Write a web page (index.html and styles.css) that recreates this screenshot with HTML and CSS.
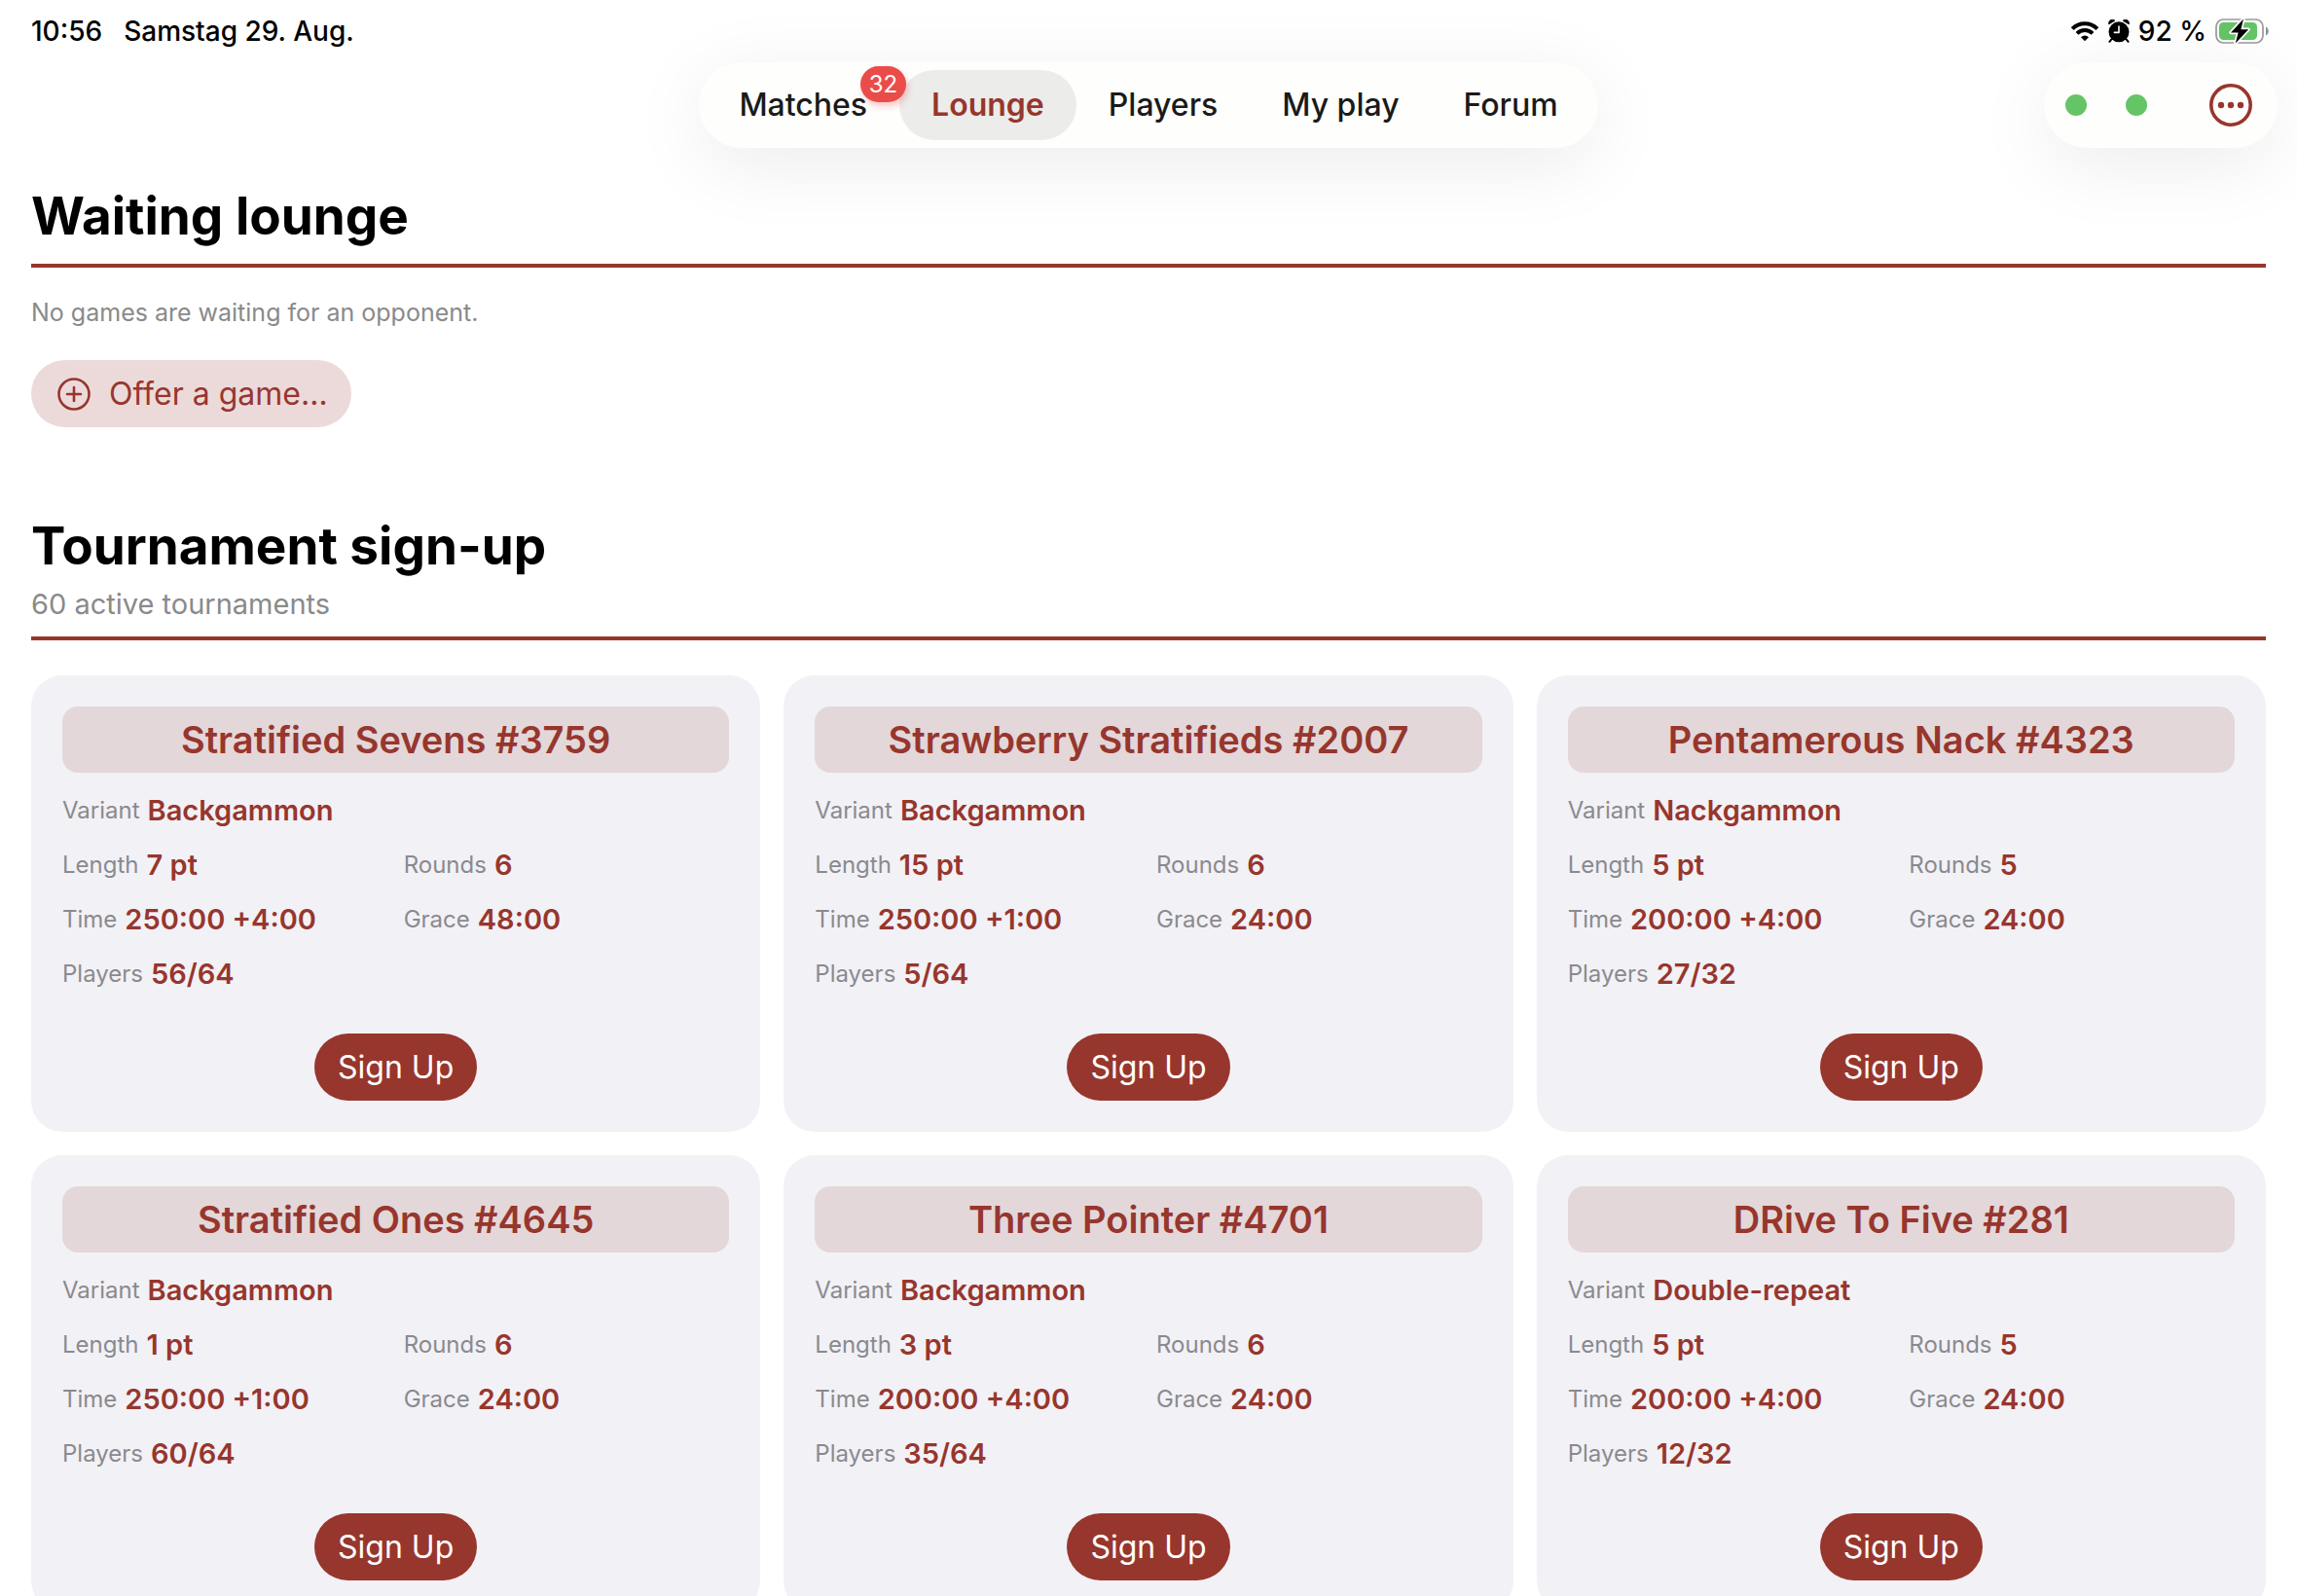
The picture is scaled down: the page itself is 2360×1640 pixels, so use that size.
FILE: index.html
```html
<!DOCTYPE html>
<html lang="en">
<head>
<meta charset="utf-8">
<meta name="viewport" content="width=device-width, initial-scale=1">
<title>Lounge</title>
<link rel="stylesheet" href="styles.css">
</head>
<body>
<div class="app">
  <header class="top">
    <div class="status">
      <div class="status-group status-left"><span>10:56</span><span lang="de">Samstag 29. Aug.</span></div>
      <div class="status-group status-right">
        <svg class="icon-wifi" viewBox="0 0 30 22" aria-hidden="true">
          <path d="M2.2 8.6a18.2 18.2 0 0 1 25.6 0" fill="none" stroke="#000" stroke-width="4"/>
          <path d="M7 13.4a11.4 11.4 0 0 1 16 0" fill="none" stroke="#000" stroke-width="4"/>
          <path d="M15 21.2l-4-4a5.7 5.7 0 0 1 8 0z" fill="#000"/>
        </svg>
        <svg class="icon-alarm" viewBox="0 0 22 24" aria-hidden="true">
          <circle cx="11" cy="12.8" r="10.5"/>
          <path d="M.9 4.600A3.400 3.400 0 0 1 6.400 1.200zM21.100 4.600A3.400 3.400 0 0 0 15.600 1.200z" stroke="#000" stroke-width="1.200" stroke-linejoin="round"/>
          <path d="M3.400 20.400l-2 2.400M18.600 20.400l2 2.400" stroke="#000" stroke-width="2" stroke-linecap="round"/>
          <path d="M11 7v6.400H6.400" fill="none" stroke="#fff" stroke-width="1.600" stroke-linecap="round" stroke-linejoin="round"/>
        </svg>
        <span>92 %</span>
        <svg class="icon-battery" viewBox="0 0 56 28" aria-hidden="true">
          <rect x="1" y="2" width="48" height="24" rx="7.500" fill="none" stroke="#9a9a9a" stroke-width="1.700"/>
          <path d="M52 9.500c3.600 1.800 3.600 7.200 0 9z" fill="#8f8f8f"/>
          <rect x="4" y="5" width="39" height="18" rx="4.500" fill="#65c466"/>
          <path d="M29 1.500 16 15.500h7.600L20.800 26.500 34.200 12.200h-7.800z" fill="#000" stroke="#fff" stroke-width="3.400" stroke-linejoin="round" paint-order="stroke"/>
        </svg>
      </div>
    </div>
    <div class="bar">
      <nav class="tabs" aria-label="Main">
        <a class="tab" href="#matches">Matches<span class="badge">32</span></a>
        <a class="tab tab-active" href="#lounge" aria-current="page">Lounge</a>
        <a class="tab" href="#players">Players</a>
        <a class="tab" href="#play">My play</a>
        <a class="tab" href="#forum">Forum</a>
      </nav>
      <div class="tools">
        <span class="dot"></span>
        <span class="dot"></span>
        <button class="more" type="button" aria-label="More">
          <svg viewBox="0 0 44 44" aria-hidden="true">
            <circle cx="22" cy="22" r="20.200" fill="none" stroke="currentColor" stroke-width="3.600"/>
            <circle cx="12" cy="22" r="3.200" fill="currentColor"/><circle cx="22" cy="22" r="3.200" fill="currentColor"/><circle cx="32" cy="22" r="3.200" fill="currentColor"/>
          </svg>
        </button>
      </div>
    </div>
  </header>

  <main class="content">
    <section class="waiting">
      <div class="heading"><h1>Waiting lounge</h1></div>
      <p class="note">No games are waiting for an opponent.</p>
      <button class="offer" type="button">
        <svg viewBox="0 0 36 36" aria-hidden="true">
          <circle cx="18" cy="18" r="15.500" fill="none" stroke="currentColor" stroke-width="2.600"/>
          <path d="M18 11v14M11 18h14" stroke="currentColor" stroke-width="2.600" stroke-linecap="round"/>
        </svg>
        <span>Offer a game…</span>
      </button>
    </section>

    <section class="signup">
      <div class="heading"><h1>Tournament sign-up</h1><p class="sub">60 active tournaments</p></div>
      <div class="cards">
        <article class="card">
          <h2>Stratified Sevens #3759</h2>
          <dl>
            <div class="wide"><dt>Variant</dt><dd>Backgammon</dd></div>
            <div><dt>Length</dt><dd>7 pt</dd></div><div><dt>Rounds</dt><dd>6</dd></div>
            <div><dt>Time</dt><dd>250:00 +4:00</dd></div><div><dt>Grace</dt><dd>48:00</dd></div>
            <div><dt>Players</dt><dd>56/64</dd></div>
          </dl>
          <button class="join" type="button">Sign Up</button>
        </article>
        <article class="card">
          <h2>Strawberry Stratifieds #2007</h2>
          <dl>
            <div class="wide"><dt>Variant</dt><dd>Backgammon</dd></div>
            <div><dt>Length</dt><dd>15 pt</dd></div><div><dt>Rounds</dt><dd>6</dd></div>
            <div><dt>Time</dt><dd>250:00 +1:00</dd></div><div><dt>Grace</dt><dd>24:00</dd></div>
            <div><dt>Players</dt><dd>5/64</dd></div>
          </dl>
          <button class="join" type="button">Sign Up</button>
        </article>
        <article class="card">
          <h2>Pentamerous Nack #4323</h2>
          <dl>
            <div class="wide"><dt>Variant</dt><dd>Nackgammon</dd></div>
            <div><dt>Length</dt><dd>5 pt</dd></div><div><dt>Rounds</dt><dd>5</dd></div>
            <div><dt>Time</dt><dd>200:00 +4:00</dd></div><div><dt>Grace</dt><dd>24:00</dd></div>
            <div><dt>Players</dt><dd>27/32</dd></div>
          </dl>
          <button class="join" type="button">Sign Up</button>
        </article>
        <article class="card">
          <h2>Stratified Ones #4645</h2>
          <dl>
            <div class="wide"><dt>Variant</dt><dd>Backgammon</dd></div>
            <div><dt>Length</dt><dd>1 pt</dd></div><div><dt>Rounds</dt><dd>6</dd></div>
            <div><dt>Time</dt><dd>250:00 +1:00</dd></div><div><dt>Grace</dt><dd>24:00</dd></div>
            <div><dt>Players</dt><dd>60/64</dd></div>
          </dl>
          <button class="join" type="button">Sign Up</button>
        </article>
        <article class="card">
          <h2>Three Pointer #4701</h2>
          <dl>
            <div class="wide"><dt>Variant</dt><dd>Backgammon</dd></div>
            <div><dt>Length</dt><dd>3 pt</dd></div><div><dt>Rounds</dt><dd>6</dd></div>
            <div><dt>Time</dt><dd>200:00 +4:00</dd></div><div><dt>Grace</dt><dd>24:00</dd></div>
            <div><dt>Players</dt><dd>35/64</dd></div>
          </dl>
          <button class="join" type="button">Sign Up</button>
        </article>
        <article class="card">
          <h2>DRive To Five #281</h2>
          <dl>
            <div class="wide"><dt>Variant</dt><dd>Double-repeat</dd></div>
            <div><dt>Length</dt><dd>5 pt</dd></div><div><dt>Rounds</dt><dd>5</dd></div>
            <div><dt>Time</dt><dd>200:00 +4:00</dd></div><div><dt>Grace</dt><dd>24:00</dd></div>
            <div><dt>Players</dt><dd>12/32</dd></div>
          </dl>
          <button class="join" type="button">Sign Up</button>
        </article>
      </div>
    </section>
  </main>
</div>
</body>
</html>
```
FILE: styles.css
```css
:root {
  --accent: #97362d;
  --gray: #8a8a8e;
  --gray-plain: #8a8a8a;
}

* { box-sizing: border-box; }

body {
  margin: 0;
  background: #fff;
  color: #000;
  font-family: Inter, "Liberation Sans", sans-serif;
}

h1, h2, p, dl, dd { margin: 0; }

button {
  border: 0;
  padding: 0;
  background: none;
  font: inherit;
  cursor: pointer;
}

svg { display: block; flex: none; }

.app {
  display: flex;
  flex-direction: column;
  height: 100vh;
}

/* Status line and floating bars */
.top {
  position: relative;
  z-index: 1;
  flex: none;
}

.status {
  display: flex;
  justify-content: space-between;
  height: 64px;
  padding: 0 28px 0 32px;
  font-size: 28px;
  font-weight: 500;
}

.status-group { display: flex; align-items: center; }
.status-left { gap: 22px; }
.status-right { gap: 9px; }

.icon-wifi { width: 30px; height: 22px; }
.icon-alarm { width: 22px; height: 24px; }
.icon-battery { width: 56px; height: 28px; }

.bar {
  display: grid;
  grid-template-columns: 1fr auto 1fr;
  padding: 0 20px;
}

.tabs, .tools {
  display: flex;
  align-items: center;
  height: 88px;
  border-radius: 44px;
  background: #fefefc;
  box-shadow: 0 16px 80px rgba(0, 0, 0, 0.08);
}

.tabs {
  grid-column: 2;
  padding: 0 8px;
}

.tab {
  position: relative;
  padding: 0 33px;
  border-radius: 36px;
  color: #1a1a1a;
  font-size: 32px;
  font-weight: 500;
  line-height: 72px;
  text-decoration: none;
}

.tab-active {
  background: #ececeb;
  color: var(--accent);
  font-weight: 600;
}

.badge {
  position: absolute;
  z-index: 1;
  top: -4px;
  right: -7px;
  padding: 0 9px;
  border-radius: 19px;
  background: #ea4d49;
  box-shadow: 2px 4px 6px rgba(234, 77, 73, 0.3);
  color: #fff;
  font-size: 24px;
  font-weight: 400;
  line-height: 37px;
}

.tools {
  justify-self: end;
  padding: 0 26px 0 22px;
}

.dot {
  width: 22px;
  height: 22px;
  margin-right: 40px;
  border-radius: 50%;
  background: #65c466;
}

.more {
  margin-left: 24px;
  color: var(--accent);
}

.more svg { width: 44px; height: 44px; }

/* Scrolling content */
.content {
  flex: 1;
  min-height: 0;
  padding: 36px 32px 32px;
  overflow-y: auto;
  scrollbar-width: none;
}

.heading {
  border-bottom: 4px solid var(--accent);
}

h1 {
  font-size: 53px;
  font-weight: 700;
  line-height: 68px;
}

.waiting .heading { padding-bottom: 15px; }

.note {
  padding: 29px 0 31px;
  color: var(--gray-plain);
  font-size: 25px;
  line-height: 35px;
}

.offer {
  display: flex;
  align-items: center;
  gap: 18px;
  height: 69px;
  padding: 0 24px 0 26px;
  border-radius: 35px;
  background: #ecdadb;
  color: var(--accent);
  font-size: 32px;
}

.offer svg { width: 36px; height: 36px; }

.signup { padding-top: 88px; }

.sub {
  padding: 4px 0 12px;
  color: var(--gray-plain);
  font-size: 29px;
  line-height: 43px;
}

.cards {
  display: grid;
  grid-template-columns: repeat(3, 1fr);
  gap: 24px;
  padding-top: 36px;
}

.card {
  display: flex;
  flex-direction: column;
  align-items: center;
  padding: 32px;
  border-radius: 32px;
  background: #f2f1f6;
}

h2 {
  width: 100%;
  border-radius: 16px;
  background: #e3d7d9;
  color: var(--accent);
  font-size: 38px;
  font-weight: 600;
  line-height: 68px;
  text-align: center;
}

dl {
  display: grid;
  grid-template-columns: 1fr 1fr;
  column-gap: 16px;
  width: 100%;
  padding: 10px 0 34px;
}

dl div {
  display: flex;
  align-items: center;
  gap: 8px;
  height: 56px;
}

.wide { grid-column: 1 / -1; }

dt {
  color: var(--gray);
  font-size: 24px;
}

dd {
  color: var(--accent);
  font-size: 29px;
  font-weight: 600;
}

.join {
  height: 69px;
  padding: 0 24px;
  border-radius: 35px;
  background: var(--accent);
  color: #fff;
  font-size: 32px;
}
```
